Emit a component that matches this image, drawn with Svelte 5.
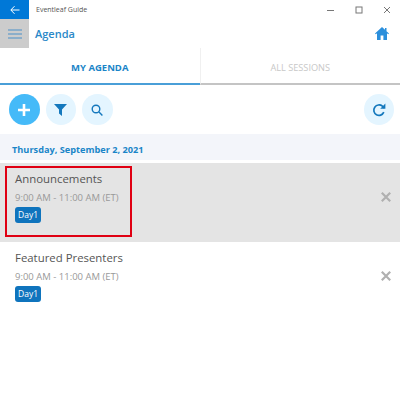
<script>
	const sessions = [
		{ title: 'Announcements', time: '9:00 AM - 11:00 AM (ET)', tag: 'Day1', marked: true },
		{ title: 'Featured Presenters', time: '9:00 AM - 11:00 AM (ET)', tag: 'Day1', marked: false }
	];
</script>

<div class="window">
	<header class="titlebar">
		<button class="back" aria-label="Back">
			<svg width="10" height="10" viewBox="0 0 10 10" fill="none" stroke="#fff" stroke-width="1">
				<path d="M9.5 5H1M4.5 1.2 0.8 5l3.7 3.8" />
			</svg>
		</button>
		<span class="app-name">Eventleaf Guide</span>
		<div class="controls">
			<svg width="8" height="8" viewBox="0 0 8 8" stroke="#777" fill="none"><path d="M0 4.5h7" /></svg>
			<svg width="8" height="8" viewBox="0 0 8 8" stroke="#777" fill="none"><rect x="1" y="1" width="6" height="6" /></svg>
			<svg width="8" height="8" viewBox="0 0 8 8" stroke="#777" fill="none"><path d="M1 1l6 6M7 1 1 7" /></svg>
		</div>
	</header>

	<div class="navbar">
		<button class="menu" aria-label="Menu">
			<svg width="14" height="10" viewBox="0 0 14 10" stroke="#4a90c8" stroke-width="1.2">
				<path d="M0 1h14M0 5h14M0 9h14" />
			</svg>
		</button>
		<h1>Agenda</h1>
		<svg class="home" width="14" height="13" viewBox="0 0 14 13" fill="#2b8fdc">
			<path d="M7 0 0 6.5l.8.8L2 6.2V13h3.6V8.6h2.8V13H12V6.2l1.2 1.1.8-.8L11.5 4.2V1H10v1.8z" />
		</svg>
	</div>

	<nav class="tabs">
		<div class="tab active">MY AGENDA</div>
		<div class="tab">ALL SESSIONS</div>
	</nav>

	<div class="toolbar">
		<button class="round add" aria-label="Add">
			<svg width="14" height="14" viewBox="0 0 14 14" stroke="#fff" stroke-width="2.6"><path d="M7 1v12M1 7h12" /></svg>
		</button>
		<button class="round" aria-label="Filter">
			<svg width="13" height="13" viewBox="0 0 13 13" fill="#1478bd"><path d="M0 1h13L8 6.5V13L5 10.5v-4z" /></svg>
		</button>
		<button class="round" aria-label="Search">
			<svg width="12" height="12" viewBox="0 0 12 12" fill="none" stroke="#1478bd" stroke-width="1.4">
				<circle cx="5" cy="5" r="3.8" /><path d="M8 8l3.4 3.4" />
			</svg>
		</button>
		<button class="round refresh" aria-label="Refresh">
			<svg width="14" height="14" viewBox="0 0 14 14" fill="none" stroke="#1478bd" stroke-width="1.7">
				<path d="M11.8 9.2A5.2 5.2 0 1 1 10.4 3.2L12 4.8" /><path d="M13.4 .6v5.2H8.2z" fill="#1478bd" stroke="none" />
			</svg>
		</button>
	</div>

	<div class="date">Thursday, September 2, 2021</div>

	{#each sessions as s}
		<div class="session" class:selected={s.marked}>
			<div class="body" class:marked={s.marked}>
				<div class="title">{s.title}</div>
				<div class="time">{s.time}</div>
				<span class="tag">{s.tag}</span>
			</div>
			<svg class="remove" width="10" height="10" viewBox="0 0 10 10" stroke="#b0b0b0" stroke-width="2.2">
				<path d="M.8.8l8.4 8.4M9.2.8.8 9.2" />
			</svg>
		</div>
	{/each}
</div>

<style>
	:global(body) {
		background: #fff;
	}

	.window {
		width: 400px;
		height: 400px;
		overflow: hidden;
		font-family: 'Open Sans', 'Noto Sans', sans-serif;
	}

	button {
		border: none;
		padding: 0;
		display: flex;
		align-items: center;
		justify-content: center;
	}

	.titlebar {
		height: 19px;
		display: flex;
		align-items: center;
	}

	.back {
		width: 29px;
		height: 19px;
		background: #0078d7;
	}

	.app-name {
		margin-left: 7px;
		font-size: 7px;
		color: #555;
	}

	.controls {
		margin-left: auto;
		display: flex;
		gap: 20px;
		padding-right: 9px;
	}

	.navbar {
		height: 29px;
		display: flex;
		align-items: center;
	}

	.menu {
		width: 29px;
		height: 29px;
		background: #ccc;
	}

	h1 {
		margin: 0 0 0 6px;
		font-size: 11px;
		font-weight: 600;
		color: #2a88c8;
	}

	.home {
		margin-left: auto;
		margin-right: 11px;
	}

	.tabs {
		display: flex;
		height: 37px;
	}

	.tab {
		flex: 1;
		display: flex;
		align-items: center;
		justify-content: center;
		padding-top: 3px;
		font-size: 9.2px;
		color: #c8c8c8;
		border-bottom: 2px solid #c4c4c4;
		border-left: 1px solid #f0f0f0;
	}

	.tab.active {
		color: #1a85c8;
		font-size: 9.5px;
		font-weight: 700;
		border-bottom-color: #4a9fd8;
		border-left: none;
	}

	.toolbar {
		display: flex;
		gap: 6px;
		padding: 9px 6px 9px 9px;
	}

	.round {
		width: 30.5px;
		height: 31px;
		border-radius: 50%;
		background: #e4f5ff;
	}

	.add {
		background: #45baf8;
	}

	.refresh {
		margin-left: auto;
	}

	.date {
		height: 26px;
		box-sizing: border-box;
		display: flex;
		align-items: center;
		padding: 4px 0 0 12px;
		background: #f3f5fa;
		font-size: 9.2px;
		font-weight: 700;
		color: #1a85c8;
		margin-bottom: 3px;
	}

	.session {
		height: 79px;
		display: flex;
		align-items: flex-start;
		padding: 3px 9px 0 5px;
		box-sizing: border-box;
	}

	.selected {
		background: #e4e4e4;
	}

	.body {
		width: 127px;
		height: 71px;
		box-sizing: border-box;
		padding: 3px 0 0 8px;
		border: 2px solid transparent;
		white-space: nowrap;
	}

	.marked {
		border-color: #e00012;
	}

	.title {
		font-size: 11.4px;
		line-height: 16px;
		color: #555;
	}

	.time {
		margin-top: 5px;
		font-size: 9.5px;
		line-height: 12px;
		color: #999;
	}

	.tag {
		display: block;
		width: fit-content;
		margin-top: 3px;
		padding: 0 3px;
		height: 16px;
		line-height: 16px;
		border-radius: 3px;
		background: #0f74bd;
		color: #fff;
		font-size: 8.5px;
	}

	.remove {
		margin-left: auto;
		margin-top: 26px;
	}
</style>
